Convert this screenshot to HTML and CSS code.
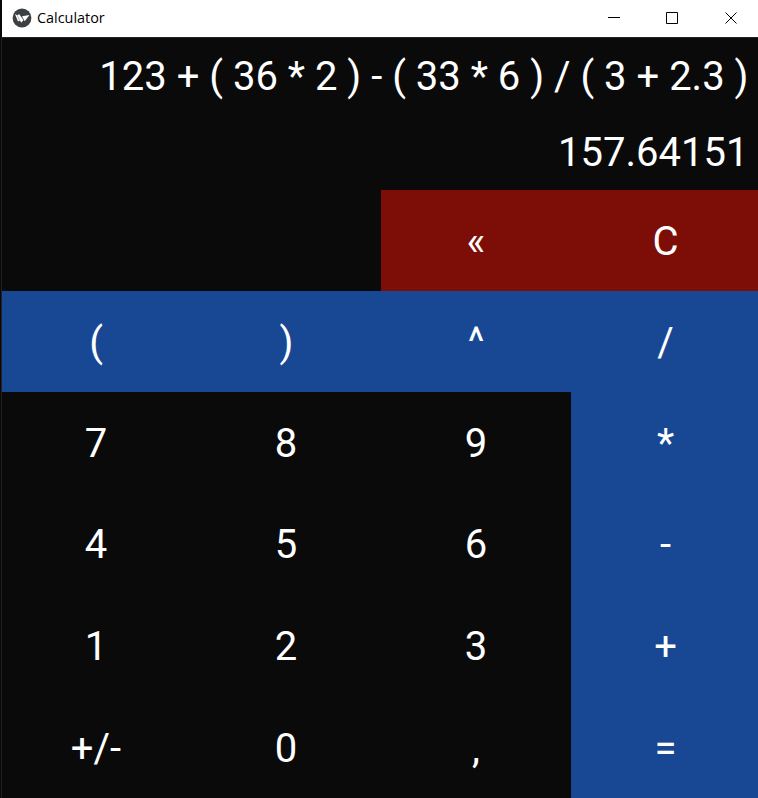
FILE: index.html
```html
<!DOCTYPE html>
<html lang="en">
<head>
<meta charset="utf-8">
<title>Calculator</title>
<link rel="stylesheet" href="styles.css">
</head>
<body>
<div class="window">
  <header class="titlebar">
    <svg class="logo" viewBox="0 0 20 20"><circle cx="10" cy="10" r="9.4" fill="#3d4043"/><path d="M3 6l2.500 1.500L7 6l4.500 6L9.500 14.500 7.500 12.500 6 13.500z" fill="#fff"/><path d="M10 8.200L17.500 7l-4.800 6.300z" fill="#fff"/><path d="M5.500 7.500l2 5" stroke="#9a9c9e" stroke-width=".7"/></svg>
    <span class="title">Calculator</span>
    <div class="controls">
      <svg viewBox="0 0 14 14"><path d="M1 6.500h12"/></svg>
      <svg viewBox="0 0 14 14"><path d="M1.500 1.500h11v11h-11z"/></svg>
      <svg viewBox="0 0 14 14"><path d="M1.500 1.500l11 11M12.500 1.500l-11 11"/></svg>
    </div>
  </header>
  <main class="app">
    <div class="expression">123 + ( 36 * 2 ) - ( 33 * 6 ) / ( 3 + 2.3 )</div>
    <div class="result">157.64151</div>
    <div class="keys">
      <span></span><span></span><button class="red">«</button><button class="red last">C</button>
      <button class="blue first">(</button><button class="blue">)</button><button class="blue">^</button><button class="blue last">/</button>
      <button class="first">7</button><button class="second">8</button><button>9</button><button class="blue last">*</button>
      <button class="first">4</button><button class="second">5</button><button>6</button><button class="blue last">-</button>
      <button class="first">1</button><button class="second">2</button><button>3</button><button class="blue last">+</button>
      <button class="first low">+/-</button><button class="second low">0</button><button class="low">,</button><button class="blue last low">=</button>
    </div>
  </main>
</div>
</body>
</html>
```
FILE: styles.css
```css
* { box-sizing: border-box; }
body { margin: 0; background: #0a0a0a; }
.window { width: 758px; height: 798px; overflow: hidden; display: flex; flex-direction: column; }
.titlebar { height: 37px; flex: none; background: #fff; display: flex; align-items: center; padding-left: 10px; border-left: 2px solid #080808; }
.logo { width: 20px; height: 20px; margin-top: -2px; }
.title { font: 14.4px "Open Sans", sans-serif; color: #000; margin: -2px 0 0 5px; }
.controls { margin: -2px 0 0 auto; display: flex; gap: 44px; padding-right: 20px; }
.controls svg { width: 14px; height: 14px; fill: none; stroke: #000; stroke-width: 1; }
.controls svg:nth-child(-n+2) { margin-left: -1px; margin-right: 1px; }
.app { flex: 1; border-top: 1px solid #1c1c1c; border-left: 2px solid #080808; border-image: linear-gradient(90deg, #080808 1px, #222 1px) 1 2; color: #fff; font: 40px Roboto, sans-serif; }
.expression, .result { height: 76px; line-height: 78px; text-align: right; padding-right: 9.5px; white-space: pre; }
.keys { display: grid; grid-template-columns: 190px 189px 190px 187px; grid-template-rows: 101px 101px repeat(4, 101.5px); }
button { border: 0; margin: 0; padding: 1px 0 0; background: transparent; color: inherit; font: inherit; }
.first { padding-right: 2px; }
.second { padding-right: 1px; }
.last { padding-left: 2px; }
.low { padding-top: 2px; }
.blue { background: #184894; }
.red { background: #7d0e07; }
```
